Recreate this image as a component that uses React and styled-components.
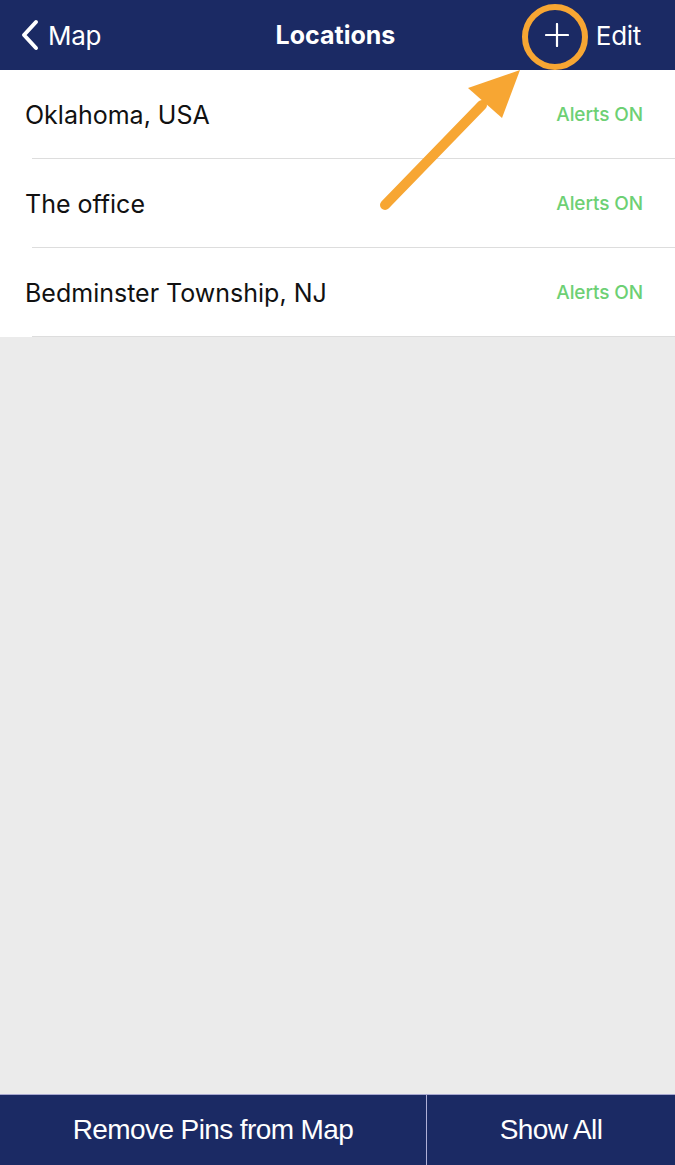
import React from "react";
import styled, { createGlobalStyle } from "styled-components";

const Global = createGlobalStyle`
  html, body { margin: 0; padding: 0; }
  body { font-family: Inter, "Liberation Sans", sans-serif; background: #ebebeb; }
`;

const Screen = styled.div`
  position: relative;
  width: 675px;
  height: 1165px;
  display: flex;
  flex-direction: column;
  background: #ebebeb;
  overflow: hidden;
`;

const NavBar = styled.header`
  height: 70px;
  background: #1b2a64;
  display: grid;
  grid-template-columns: 1fr auto 1fr;
  align-items: center;
  color: #fff;
  padding: 0 34px 0 20px;
  box-sizing: border-box;
`;

const BackButton = styled.div`
  display: flex;
  align-items: center;
  gap: 8px;
  font-size: 26px;
  letter-spacing: -0.3px;
`;

const Title = styled.div`
  font-size: 25px;
  font-weight: 700;
  letter-spacing: 0;
  margin-left: 10px;
`;

const RightActions = styled.div`
  display: flex;
  justify-content: flex-end;
  align-items: center;
  gap: 27px;
  font-size: 26px;
  letter-spacing: -0.3px;
`;

const List = styled.ul`
  list-style: none;
  margin: 0;
  padding: 0;
  background: #fff;
`;

const Row = styled.li`
  height: 89px;
  display: flex;
  align-items: center;
  justify-content: space-between;
  padding: 0 32px 0 25px;
  box-sizing: border-box;
  position: relative;
  &::after {
    content: "";
    position: absolute;
    left: 32px;
    right: 0;
    bottom: 0;
    height: 1px;
    background: #dddddd;
  }
`;

const RowLabel = styled.span`
  font-size: 25px;
  color: #111;
  letter-spacing: 0;
`;

const Status = styled.span`
  font-size: 19px;
  color: #6dd074;
  font-weight: 500;
  letter-spacing: -0.1px;
`;

const Spacer = styled.div`
  flex: 1;
`;

const BottomBar = styled.footer`
  height: 71px;
  background: #1b2a64;
  border-top: 1px solid #a8a8d0;
  display: grid;
  grid-template-columns: 426px 1fr;
  box-sizing: border-box;
`;

const BarButton = styled.div`
  display: flex;
  align-items: center;
  justify-content: center;
  color: #fff;
  font-family: "Liberation Sans", Arial, sans-serif;
  font-size: 28px;
  letter-spacing: -0.6px;
  border-left: ${(p) => (p.$divider ? "1.5px solid #b0b0d8" : "none")};
`;

const Annotation = styled.svg`
  position: absolute;
  left: 0;
  top: 0;
  pointer-events: none;
`;

const rows = ["Oklahoma, USA", "The office", "Bedminster Township, NJ"];

export default function App() {
  return (
    <Screen>
      <Global />
      <NavBar>
        <BackButton>
          <svg width="20" height="32" viewBox="0 0 20 32">
            <path d="M16 3 L4 16 L16 29" fill="none" stroke="#fff" strokeWidth="4" strokeLinecap="round" strokeLinejoin="round" />
          </svg>
          Map
        </BackButton>
        <Title>Locations</Title>
        <RightActions>
          <svg width="24" height="24" viewBox="0 0 24 24">
            <path d="M12 1 V23 M1 12 H23" stroke="#fff" strokeWidth="2.2" strokeLinecap="round" />
          </svg>
          <span>Edit</span>
        </RightActions>
      </NavBar>
      <List>
        {rows.map((r) => (
          <Row key={r}>
            <RowLabel>{r}</RowLabel>
            <Status>Alerts ON</Status>
          </Row>
        ))}
      </List>
      <Spacer />
      <BottomBar>
        <BarButton>Remove Pins from Map</BarButton>
        <BarButton $divider>Show All</BarButton>
      </BottomBar>
      <Annotation width="675" height="260" viewBox="0 0 675 260">
        <circle cx="555" cy="37" r="30" fill="none" stroke="#f7a633" strokeWidth="6" />
        <line x1="385" y1="205" x2="482" y2="105" stroke="#f7a633" strokeWidth="10" strokeLinecap="round" />
        <polygon points="520,70 502,118 468,88" fill="#f7a633" />
      </Annotation>
    </Screen>
  );
}
